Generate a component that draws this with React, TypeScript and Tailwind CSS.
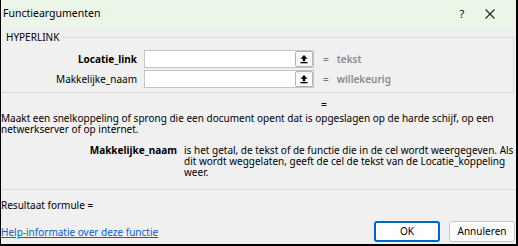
import React from "react";

function UploadIcon() {
  return (
    <svg width="10" height="10" viewBox="0 0 10 10">
      <path d="M5 1 L8.5 4.8 L6.2 4.8 L6.2 7.2 L3.8 7.2 L3.8 4.8 L1.5 4.8 Z" fill="#000" />
      <rect x="1.5" y="8" width="7" height="1.3" fill="#000" />
    </svg>
  );
}

function ArgRow({ label, bold, value }: { label: string; bold?: boolean; value: string }) {
  return (
    <div className="flex items-center h-[18px]">
      <div className={`w-[137px] text-right pr-[1px] ${bold ? "font-bold" : ""}`}>{label}</div>
      <div className="ml-[6px] w-[170px] h-[18px] bg-white border border-[#c4c4c4] flex justify-end">
        <div className="w-[18px] h-[16px] border border-[#b4b4b4] rounded-[2px] bg-[#fbfbfb] flex items-center justify-center">
          <UploadIcon />
        </div>
      </div>
      <div className="ml-[9px] text-[#7a7a7a] font-semibold">=</div>
      <div className="ml-[8px] text-[#8a8a8a] font-semibold">{value}</div>
    </div>
  );
}

export default function App() {
  return (
    <div
      className="w-[518px] h-[246px] bg-[#f0f0f0] border-l border-r-2 border-b-2 border-black flex flex-col text-[10px] leading-[11px] text-black overflow-hidden"
      style={{ fontFamily: '"Noto Sans", "Open Sans", sans-serif' }}
    >
      <div className="h-[27px] bg-[#ecf6e8] flex items-center shrink-0">
        <div className="ml-[2px] text-[10.5px]">Functieargumenten</div>
        <div className="ml-auto w-[20px] text-center text-[11px]">?</div>
        <div className="ml-[10px] mr-[18px] w-[16px] flex items-center justify-center">
          <svg width="10" height="10" viewBox="0 0 10 10">
            <path d="M0.5 0.5 L9.5 9.5 M9.5 0.5 L0.5 9.5" stroke="#222" strokeWidth="1.1" />
          </svg>
        </div>
      </div>

      <div className="mt-[10px] mr-[2px] border-r border-b border-[#dcdcdc] shrink-0">
        <div className="flex h-[13px]">
          <span className="-mt-[5px] ml-[5px] pr-[3px] h-[13px]">HYPERLINK</span>
          <div className="flex-1 border-t border-[#dcdcdc]" />
        </div>
        <div className="flex flex-col gap-[2px] pb-[4px]">
          <ArgRow label="Locatie_link" bold value="tekst" />
          <ArgRow label="Makkelijke_naam" value="willekeurig" />
        </div>
      </div>

      <div className="mt-[6px] pl-[320px] font-semibold h-[11px]">=</div>
      <div className="mt-[3px] pr-[4px]">
        Maakt een snelkoppeling of sprong die een document opent dat is opgeslagen op de harde schijf, op een
        netwerkserver of op internet.
      </div>
      <div className="mt-[10px] flex">
        <div className="w-[176px] text-right font-bold shrink-0">Makkelijke_naam</div>
        <div className="ml-[7px] pr-[1px]">
          is het getal, de tekst of de functie die in de cel wordt weergegeven. Als dit wordt weggelaten, geeft de cel de tekst van de Locatie_koppeling weer.
        </div>
      </div>

      <div className="mt-[11px] border-t border-[#dcdcdc]" />
      <div className="mt-[10px]">Resultaat formule =</div>
      <div className="mt-auto mb-[2px] flex items-center h-[21px]">
        <a className="mt-[2px] text-[#0563c1] underline">Help-informatie over deze functie</a>
        <button className="ml-auto shrink-0 w-[66px] h-[21px] rounded-[3px] border-2 border-[#0067c0] bg-[#fdfdfd]">OK</button>
        <button className="ml-[9px] mr-[1px] shrink-0 w-[66px] h-[21px] rounded-[3px] border border-[#c8c8c8] bg-[#fdfdfd]">Annuleren</button>
      </div>
    </div>
  );
}
